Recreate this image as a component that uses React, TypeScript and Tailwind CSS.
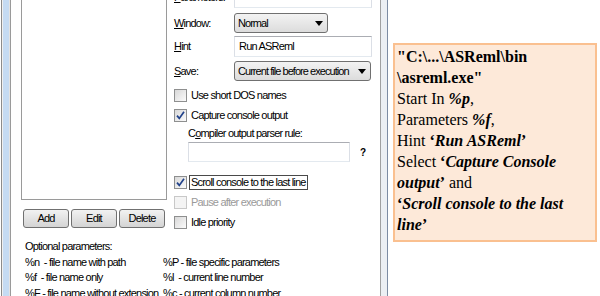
import React from "react";

function Box({ checked, disabled }: { checked?: boolean; disabled?: boolean }) {
  return (
    <span
      className={
        disabled
          ? "w-[13px] h-[13px] border border-[#c8c8c8] bg-[#f4f4f4] flex items-center justify-center shrink-0"
          : "w-[13px] h-[13px] border border-[#8e8f8f] bg-gradient-to-br from-[#d8d8d8] to-[#fbfbfb] flex items-center justify-center shrink-0"
      }
    >
      {checked && (
        <svg width="11" height="11" viewBox="0 0 11 11">
          <path d="M2 5.6 L4.3 8.4 L9 1.8" fill="none" stroke="#21428a" strokeWidth="1.7" />
        </svg>
      )}
    </span>
  );
}

function CheckRow({
  label,
  checked,
  disabled,
  focus,
}: {
  label: string;
  checked?: boolean;
  disabled?: boolean;
  focus?: boolean;
}) {
  return (
    <div className="flex items-center h-[20px] gap-[2px]">
      <Box checked={checked} disabled={disabled} />
      <span
        className={
          focus
            ? "border border-[#4a4a4a] px-[1px] leading-[13px] text-black"
            : disabled
            ? "px-[2px] text-[#9a9a9a]"
            : "px-[2px] text-black"
        }
      >
        {label}
      </span>
    </div>
  );
}

function Arrow() {
  return (
    <svg width="8" height="5" viewBox="0 0 8 5">
      <polygon points="0,0 8,0 4,5" fill="#000" />
    </svg>
  );
}

function Combo({ text, w }: { text: string; w: string }) {
  return (
    <div
      className={`${w} h-[20px] border border-[#707070] rounded-[3px] bg-gradient-to-b from-[#f3f3f3] to-[#dcdcdc] flex items-center justify-between pl-[3px] pr-[4px]`}
    >
      <span className="tracking-[-0.95px]">{text}</span>
      <Arrow />
    </div>
  );
}

function Input({ text, w }: { text?: string; w: string }) {
  return (
    <div
      className={`${w} h-[21px] border border-t-[#abadb3] border-x-[#dbdfe6] border-b-[#e3e9ef] bg-white flex items-center pl-[4px]`}
    >
      {text}
    </div>
  );
}

function Btn({ text }: { text: string }) {
  return (
    <div className="w-[46px] h-[19px] border border-[#707070] rounded-[3px] bg-gradient-to-b from-[#f2f2f2] to-[#d4d4d4] flex items-center justify-center">
      {text}
    </div>
  );
}

function Label({ first, rest }: { first: string; rest: string }) {
  return (
    <span className="w-[60px] shrink-0">
      <span className="underline">{first}</span>
      {rest}
    </span>
  );
}

export default function App() {
  return (
    <div className="w-[600px] h-[296px] overflow-hidden bg-white flex font-['Liberation_Sans',Arial,sans-serif] text-[11px] tracking-[-0.8px] text-black">
      {/* left window chrome */}
      <div className="flex h-full shrink-0">
        <div className="w-[1px] bg-white" />
        <div className="w-[1px] bg-[#8c8c8c]" />
        <div className="w-[1px] bg-[#f0f0f0]" />
        <div className="w-[6px] bg-[#c5dbf3]" />
        <div className="w-[1px] bg-[#e2e2e2]" />
        <div className="w-[1px] bg-[#9a9a9a]" />
        <div className="w-[1px] bg-white" />
      </div>

      {/* dialog */}
      <div className="w-[368px] shrink-0 flex flex-col pl-[9px] pr-[8px] -mt-[13px]">
        <div className="flex">
          {/* left column */}
          <div className="w-[146px] shrink-0 flex flex-col">
            <div className="h-[213px] border border-[#9a9a9a] bg-white" />
            <div className="mt-[9px] flex gap-[2px] pl-[2px]">
              <Btn text="Add" />
              <Btn text="Edit" />
              <Btn text="Delete" />
            </div>
          </div>
          {/* right column */}
          <div className="ml-[7px] flex-1 flex flex-col">
            <div className="flex items-center h-[21px]">
              <Label first="P" rest="arameters:" />
              <Input w="w-[138px]" />
            </div>
            <div className="flex items-center h-[20px] mt-[5px]">
              <Label first="W" rest="indow:" />
              <Combo text="Normal" w="w-[94px]" />
            </div>
            <div className="flex items-center h-[21px] mt-[3px]">
              <Label first="H" rest="int" />
              <Input text="Run ASReml" w="w-[138px]" />
            </div>
            <div className="flex items-center h-[20px] mt-[4px]">
              <Label first="S" rest="ave:" />
              <Combo text="Current file before execution" w="w-[137px]" />
            </div>
            <div className="mt-[4px]">
              <CheckRow label="Use short DOS names" />
              <CheckRow label="Capture console output" checked />
            </div>
            <div className="h-[16px] flex items-center pl-[14px]">
              <span>
                C<span className="underline">o</span>mpiler output parser rule:
              </span>
            </div>
            <div className="mt-[1px] flex items-center pl-[14px]">
              <div className="w-[162px] h-[20px] border border-t-[#abadb3] border-x-[#dbdfe6] border-b-[#e3e9ef] bg-white" />
              <span className="ml-[10px] font-bold text-[10px]">?</span>
            </div>
            <div className="mt-[10px]">
              <CheckRow label="Scroll console to the last line" checked focus />
              <CheckRow label="Pause after execution" disabled />
              <CheckRow label="Idle priority" />
            </div>
          </div>
        </div>
        <div className="mt-[5px] h-[1px] bg-[#a8a8a8]" />
        <div className="mt-[2px] pl-[4px] leading-[15.5px]">
          <div>Optional parameters:</div>
          <div className="flex">
            <span className="w-[138px] shrink-0">%n&nbsp; - file name with path</span>
            <span>%P - file specific parameters</span>
          </div>
          <div className="flex">
            <span className="w-[138px] shrink-0">%f&nbsp; - file name only</span>
            <span>%l&nbsp; - current line number</span>
          </div>
          <div className="flex">
            <span className="w-[138px] shrink-0">%F - file name without extension</span>
            <span>%c - current column number</span>
          </div>
        </div>
      </div>

      {/* right window chrome */}
      <div className="flex h-full shrink-0">
        <div className="w-[1px] bg-[#a0a0a0]" />
        <div className="w-[6px] bg-[#eceff3]" />
        <div className="w-[1px] bg-[#7d8ca3]" />
      </div>

      {/* annotation */}
      <div className="flex-1">
        <div className="ml-[5px] mt-[43px] w-[204px] h-[199px] border-2 border-[#fac090] bg-[#fde9d9] px-[2px] pt-[1px] font-['Liberation_Serif',serif] text-[16px] leading-[21px] tracking-normal text-black">
          <div className="font-bold">{'"C:\\...\\ASReml\\bin'}</div>
          <div className="font-bold">{'\\asreml.exe"'}</div>
          <div>
            Start In <b><i>%p</i></b>,
          </div>
          <div>
            Parameters <b><i>%f</i></b>,
          </div>
          <div>
            Hint <b>‘<i>Run ASReml</i>’</b>
          </div>
          <div>
            Select <b>‘<i>Capture Console</i></b>
          </div>
          <div>
            <b><i>output</i>’</b> and
          </div>
          <div>
            <b>‘<i>Scroll console to the last</i></b>
          </div>
          <div>
            <b><i>line</i>’</b>
          </div>
        </div>
      </div>
    </div>
  );
}
